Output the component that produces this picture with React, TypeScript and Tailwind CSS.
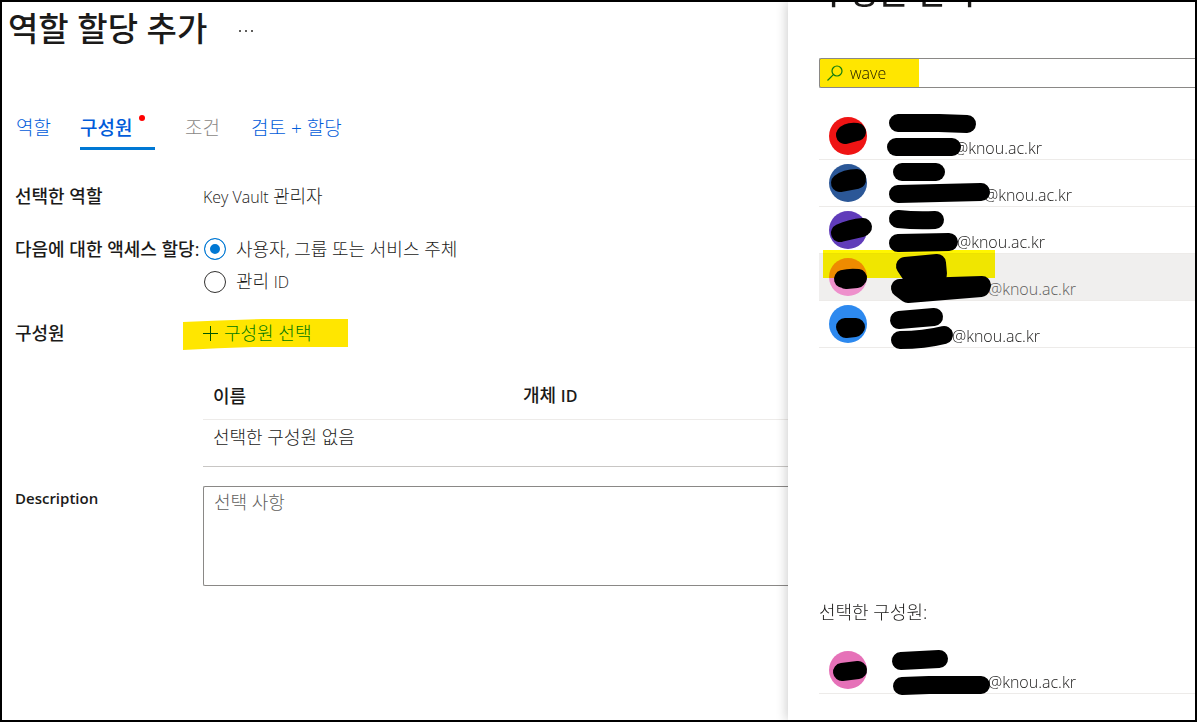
type Member = {
  id: string
  color: string
  nameWidth: number
  userWidth: number
  // pen strokes that cover the private parts, relative to the row
  strokes: string[]
  active?: boolean
}

const members: Member[] = [
  {
    id: 'm1',
    color: '#ef1414',
    nameWidth: 78,
    userWidth: 65,
    strokes: ['M79 10 L120 10 L148 11', 'M77 34 L133 34', 'M26 22 Q29 18 38 19 M26 22 L37 19'],
  },
  {
    id: 'm2',
    color: '#2b5797',
    nameWidth: 48,
    userWidth: 95,
    strokes: ['M83 12 L117 12', 'M79 34 L162 32', 'M21 23 Q27 18 38 18 M22 23 L38 20 M21 23 L27 21'],
  },
  {
    id: 'm3',
    color: '#603cba',
    nameWidth: 50,
    userWidth: 68,
    strokes: ['M79 12 Q97 14 116 13', 'M79 36 L130 35', 'M21 26 Q32 21 44 20 M21 26 L43 21'],
  },
  {
    id: 'm4',
    color: '#ee90cc',
    nameWidth: 50,
    userWidth: 99,
    strokes: [
      'M86 12 L118 9 L119 20 L92 21 Z',
      'M81 34 L100 33 L163 31 L162 34 L89 40 Z',
      'M24 25 Q31 23 39 24 M27 26 L38 25',
    ],
    active: true,
  },
  {
    id: 'm5',
    color: '#2d89ef',
    nameWidth: 50,
    userWidth: 63,
    strokes: ['M80 19 L115 16', 'M81 39 Q105 39 125 34', 'M26 26 L37 26 M27 28 L36 27'],
  },
]

const selected: Member = {
  id: 's1',
  color: '#e671b8',
  nameWidth: 50,
  userWidth: 99,
  strokes: ['M82 14 L120 12', 'M83 39 L110 38 L162 38', 'M23 25 L31 24 L39 23'],
}

function MemberRow({ member }: { member: Member }) {
  return (
    <li
      className={`relative flex h-[47px] items-center border-b border-[#edebe9] pl-2.5 ${
        member.active ? 'bg-[#f0efee] text-[#605e5c]' : ''
      }`}
    >
      <span className="size-[38px] shrink-0 rounded-full" style={{ backgroundColor: member.color }} />
      <div className="ml-[22px] flex flex-col self-stretch">
        <span className="h-6" style={{ width: member.nameWidth }} />
        <span className="flex text-[16px] leading-[22px]">
          <span style={{ width: member.userWidth }} />
          @knou.ac.kr
        </span>
      </div>
      {member.active && (
        <span className="absolute -top-1 left-1 h-7 w-[172px] bg-[#fff600] mix-blend-multiply" />
      )}
      <svg
        className="absolute top-0 left-0 z-10 overflow-visible"
        width="180"
        height="47"
        fill="black"
        stroke="black"
        strokeWidth="18"
        strokeLinecap="round"
        strokeLinejoin="round"
        aria-hidden="true"
      >
        {member.strokes.map((d) => (
          <path key={d} d={d} />
        ))}
      </svg>
    </li>
  )
}

function Tabs() {
  return (
    <nav className="mt-12 flex h-[46px] text-[19px] font-light text-[#015cda]">
      <button type="button" className="ml-3.5 w-16 pt-0.5 text-left">
        역할
      </button>
      <button
        type="button"
        className="flex w-[75px] items-center border-b-[3px] border-[#0078d4] pt-[5px] font-medium"
      >
        구성원
        <span className="mb-5 ml-[7px] size-1.5 rounded-full bg-[#ff0000]" />
      </button>
      <button type="button" disabled className="ml-[30px] w-[66px] pt-0.5 text-left text-[#8a8886]">
        조건
      </button>
      <button type="button" className="pt-0.5">
        검토 + 할당
      </button>
    </nav>
  )
}

function AssignmentForm() {
  return (
    <form className="mt-[34px] grid grid-cols-[188px_1fr] pl-[13px] text-[18px] leading-6">
      <span className="font-medium">선택한 역할</span>
      <span>
        <span className="text-[16px]">Key Vault </span>관리자
      </span>

      <span className="mt-7 font-medium whitespace-nowrap">다음에 대한 액세스 할당:</span>
      <div className="mt-7 flex flex-col gap-2">
        <label className="flex items-center gap-2.5">
          <input
            type="radio"
            name="scope"
            defaultChecked
            className="ml-px size-[22px] appearance-none rounded-full border border-[#323130] checked:border-[#0078d4] checked:bg-[#0078d4] checked:shadow-[inset_0_0_0_5px_white]"
          />
          사용자, 그룹 또는 서비스 주체
        </label>
        <label className="flex items-center gap-2.5">
          <input
            type="radio"
            name="scope"
            className="ml-px size-[22px] appearance-none rounded-full border border-[#323130] checked:border-[#0078d4] checked:bg-[#0078d4] checked:shadow-[inset_0_0_0_5px_white]"
          />
          <span>
            관리 <span className="text-[16px]">ID</span>
          </span>
        </label>
      </div>

      <span className="mt-[27px] font-medium">구성원</span>
      <div className="relative mt-[27px]">
        <svg className="absolute -top-0.5 -left-5" width="165" height="31" aria-hidden="true">
          <path d="M0 3 Q40 1 80 0 L165 0 L165 28 L70 28 Q35 29 0 31 Z" fill="#ffe600" />
        </svg>
        <button type="button" className="relative flex items-center gap-1.5 text-[#007800]">
          <svg width="15" height="15" viewBox="0 0 15 15" stroke="#005700" fill="none">
            <path d="M7.5 0V15M0 7.5H15" />
          </svg>
          구성원 선택
        </button>
      </div>

      <table className="col-start-2 mt-7 w-full table-fixed text-left">
        <thead>
          <tr className="h-[46px] border-b border-[#edebe9]">
            <th className="w-[310px] pl-2.5 font-medium">이름</th>
            <th className="pl-2.5 font-medium">
              개체 <span className="text-[16px] font-semibold">ID</span>
            </th>
          </tr>
        </thead>
        <tbody>
          <tr className="h-[47px] border-b border-[#c8c6c4]">
            <td colSpan={2} className="pt-[5px] pl-2.5 align-top">
              선택한 구성원 없음
            </td>
          </tr>
        </tbody>
      </table>

      <label htmlFor="description" className="mt-[19px] text-[15px] font-semibold">
        Description
      </label>
      <textarea
        id="description"
        placeholder="선택 사항"
        className="mt-[19px] h-[100px] resize-none rounded-l-xs border border-r-0 border-[#8a8886] px-2.5 py-[3px] font-light placeholder:text-[#605e5c]"
      />
    </form>
  )
}

function SelectPanel() {
  return (
    <aside className="z-10 flex min-w-0 flex-col bg-white pl-[31px] shadow-[-2px_0_10px_rgba(0,0,0,0.18)]">
      <div className="flex h-2 items-end overflow-hidden">
        <h2 className="text-[32px] leading-9 font-medium">구성원 선택</h2>
      </div>

      <div className="relative mt-12 flex h-[30px] items-center rounded-l-xs border border-r-0 border-[#8a8886]">
        <input
          type="text"
          aria-label="구성원 선택"
          defaultValue="wave"
          className="h-full w-full pl-[30px] text-[16px] outline-none"
        />
        <span className="pointer-events-none absolute inset-y-0 left-0 w-[99px] bg-[#ffe600] mix-blend-multiply" />
        <svg
          className="pointer-events-none absolute left-[7px]"
          width="16"
          height="16"
          viewBox="0 0 16 16"
          fill="none"
          stroke="#107c10"
          strokeWidth="1.2"
          aria-hidden="true"
        >
          <circle cx="10" cy="6" r="5" />
          <path d="M6.4 9.6 L0.5 15.5" />
        </svg>
      </div>

      <ul className="mt-[25px]">
        {members.map((m) => (
          <MemberRow key={m.id} member={m} />
        ))}
      </ul>

      <p className="mt-auto text-[18px] leading-6">선택한 구성원:</p>
      <ul className="mt-[23px] mb-[26px]">
        <MemberRow member={selected} />
      </ul>
    </aside>
  )
}

export default function App() {
  return (
    <div className="grid min-h-screen grid-cols-[786fr_407fr] overflow-hidden border-2 border-black bg-white font-['Open_Sans','Noto_Sans_CJK_KR',sans-serif] font-light text-[#1b1a19]">
      <main className="min-w-0">
        <header className="flex h-[54px] items-center pl-1.5">
          <h1 className="text-[33px] leading-10 font-medium">역할 할당 추가</h1>
          <button type="button" aria-label="더 보기" className="mt-1 ml-8 flex gap-1">
            <span className="size-0.5 bg-[#605e5c]" />
            <span className="size-0.5 bg-[#605e5c]" />
            <span className="size-0.5 bg-[#605e5c]" />
          </button>
        </header>
        <Tabs />
        <AssignmentForm />
      </main>
      <SelectPanel />
    </div>
  )
}
